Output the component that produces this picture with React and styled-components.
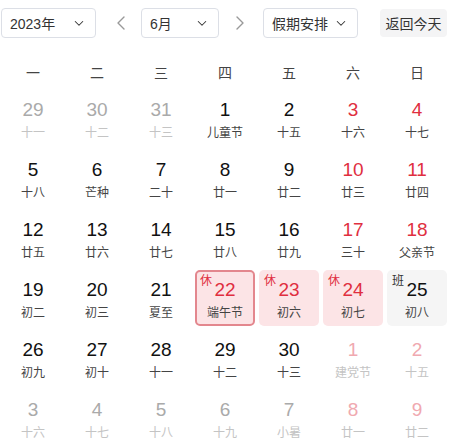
import styled, { createGlobalStyle } from 'styled-components'

const GlobalStyle = createGlobalStyle`
    body {
        margin: 0;
        font-family: "Liberation Sans", "Noto Sans CJK SC", sans-serif;
        background: #fff;
        color: #222;
    }
`

const Page = styled.div`
    width: 457px;
    height: 447px;
    overflow: hidden;
`

const Toolbar = styled.div`
    display: flex;
    align-items: center;
    height: 30px;
    padding: 8px 0 0 1px;
`

const Select = styled.div`
    box-sizing: border-box;
    width: ${p => p.$w}px;
    height: 30px;
    margin-left: ${p => p.$ml || 0}px;
    border: 1px solid #dcdfe6;
    border-radius: 4px;
    display: flex;
    align-items: center;
    justify-content: space-between;
    padding: 0 10px 0 8px;
    font-size: 14px;
    color: #333;
    font-family: "Liberation Sans", "Noto Sans CJK SC", sans-serif;
`

const Arrow = styled.div`
    width: 24px;
    height: 30px;
    margin-left: ${p => p.$ml || 0}px;
    display: flex;
    align-items: center;
    justify-content: center;
    color: #999;
`

const TodayButton = styled.div`
    box-sizing: border-box;
    width: 67px;
    height: 28px;
    margin-left: ${p => p.$ml || 0}px;
    background: #f4f4f5;
    border-radius: 4px;
    display: flex;
    align-items: center;
    justify-content: center;
    font-size: 14px;
    color: #333;
    font-family: "Noto Sans CJK SC", sans-serif;
`

const WeekHeader = styled.div`
    display: grid;
    grid-template-columns: repeat(7, 64px);
    margin: 18px 0 0 1px;
    height: 32px;
    align-items: center;
    justify-items: center;
    font-size: 14px;
    color: #444;
    font-family: "Noto Sans CJK SC", sans-serif;
`

const Grid = styled.div`
    display: grid;
    grid-template-columns: repeat(7, 64px);
    grid-auto-rows: 60px;
    margin-left: 1px;
`

const Cell = styled.div`
    position: relative;
    box-sizing: border-box;
    margin: 2px;
    border-radius: 5px;
    display: flex;
    flex-direction: column;
    align-items: center;
    background: ${p => (p.$mark === 'rest' ? '#fce4e6' : p.$mark === 'work' ? '#f5f5f5' : 'transparent')};
    border: 2px solid ${p => (p.$today ? '#e3878e' : 'transparent')};
`

const Num = styled.div`
    margin-top: 6px;
    height: 24px;
    line-height: 24px;
    font-size: 19px;
    color: ${p => (p.$red ? (p.$other ? '#f0a9b0' : '#e02f3f') : p.$other ? '#aaa' : '#111')};
`

const Lunar = styled.div`
    margin-top: 2px;
    font-size: 12px;
    line-height: 16px;
    color: ${p => (p.$other ? '#c4c4c4' : '#444')};
    font-family: "Noto Sans CJK SC", sans-serif;
`

const Tag = styled.span`
    position: absolute;
    left: 3px;
    top: 0px;
    font-size: 12px;
    line-height: 16px;
    color: ${p => (p.$work ? '#333' : '#e02f3f')};
    font-family: "Noto Sans CJK SC", sans-serif;
`

const Chevron = ({ dir = 'down', size = 12 }) => {
    const paths = {
        down: 'M3 6l5 5 5-5',
        left: 'M10 2L4 8l6 6',
        right: 'M6 2l6 6-6 6',
    }
    return (
        <svg width={size} height={size} viewBox="0 0 16 16" fill="none" stroke="currentColor" strokeWidth="1.4" strokeLinecap="round" strokeLinejoin="round">
            <path d={paths[dir]} />
        </svg>
    )
}

const weekdays = ['一', '二', '三', '四', '五', '六', '日']

const days = [
    ['29', '十一', 1], ['30', '十二', 1], ['31', '十三', 1], ['1', '儿童节'], ['2', '十五'], ['3', '十六'], ['4', '十七'],
    ['5', '十八'], ['6', '芒种'], ['7', '二十'], ['8', '廿一'], ['9', '廿二'], ['10', '廿三'], ['11', '廿四'],
    ['12', '廿五'], ['13', '廿六'], ['14', '廿七'], ['15', '廿八'], ['16', '廿九'], ['17', '三十'], ['18', '父亲节'],
    ['19', '初二'], ['20', '初三'], ['21', '夏至'], ['22', '端午节'], ['23', '初六'], ['24', '初七'], ['25', '初八'],
    ['26', '初九'], ['27', '初十'], ['28', '十一'], ['29', '十二'], ['30', '十三'], ['1', '建党节', 1], ['2', '十五', 1],
    ['3', '十六', 1], ['4', '十七', 1], ['5', '十八', 1], ['6', '十九', 1], ['7', '小暑', 1], ['8', '廿一', 1], ['9', '廿二', 1],
]

// index in the grid -> holiday mark
const marks = { 24: 'rest', 25: 'rest', 26: 'rest', 27: 'work' }

const App = () => (
    <Page>
        <GlobalStyle />
        <Toolbar>
            <Select $w={95}>2023年<Chevron /></Select>
            <Arrow $ml={14}><Chevron dir="left" size={16} /></Arrow>
            <Select $w={78} $ml={7}>6月<Chevron /></Select>
            <Arrow $ml={8}><Chevron dir="right" size={16} /></Arrow>
            <Select $w={95} $ml={12}>假期安排<Chevron /></Select>
            <TodayButton $ml={22}>返回今天</TodayButton>
        </Toolbar>
        <WeekHeader>
            {weekdays.map(w => <span key={w}>{w}</span>)}
        </WeekHeader>
        <Grid>
            {days.map(([n, l, other], i) => {
                const mark = marks[i]
                const weekend = i % 7 >= 5
                const red = (weekend && mark !== 'work') || mark === 'rest'
                return (
                    <Cell key={i} $mark={mark} $today={i === 24}>
                        {mark && <Tag $work={mark === 'work'}>{mark === 'work' ? '班' : '休'}</Tag>}
                        <Num $red={red} $other={other}>{n}</Num>
                        <Lunar $other={other}>{l}</Lunar>
                    </Cell>
                )
            })}
        </Grid>
    </Page>
)

export default App
